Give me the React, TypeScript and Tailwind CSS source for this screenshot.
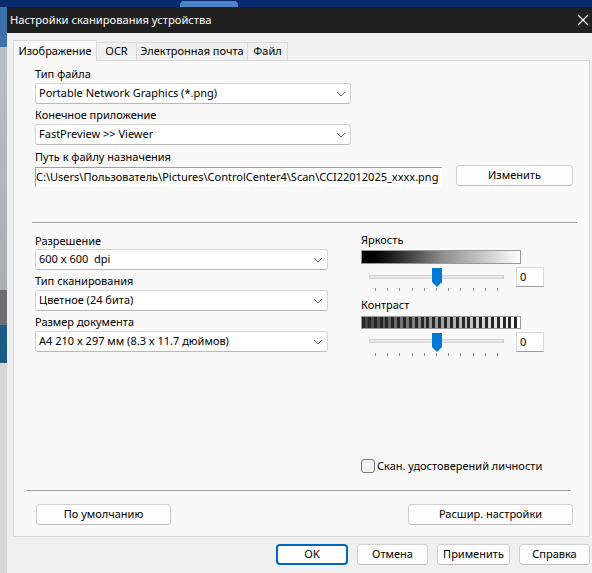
import React from 'react'

const font = { fontFamily: '"Noto Sans", "Liberation Sans", sans-serif' }

const Chevron = () => (
  <svg width="10" height="6" viewBox="0 0 10 6" className="shrink-0">
    <path d="M1 1 L5 5 L9 1" fill="none" stroke="#5f5f5f" strokeWidth="1" />
  </svg>
)

const Select = ({ value, width }: { value: string; width: string }) => (
  <div
    className={`${width} h-[21px] flex items-center justify-between pl-[3px] pr-[4px] bg-white border border-[#d5d5d5] border-b-[#b9b9b9] rounded-[3px] text-[11px] text-black`}
  >
    <span className="truncate whitespace-pre">{value}</span>
    <Chevron />
  </div>
)

const Button = ({ label, width, primary }: { label: string; width: string; primary?: boolean }) => (
  <div
    className={`${width} h-[21px] flex items-center justify-center rounded-[4px] bg-[#fdfdfd] text-[11px] text-black whitespace-nowrap ${
      primary ? 'border-2 border-[#0067c0]' : 'border border-[#d0d0d0] border-b-[#bdbdbd]'
    }`}
  >
    {label}
  </div>
)

const Label = ({ children }: { children: React.ReactNode }) => (
  <div className="h-4 leading-4 text-[11px] text-black whitespace-nowrap">{children}</div>
)

// horizontal trackbar drawn as svg, thumb in the middle
const Slider = ({ trackY }: { trackY: number }) => (
  <svg width="148" height="26" viewBox="0 0 148 26" className="shrink-0">
    <rect x="6.5" y={trackY + 0.5} width="134" height="3" fill="#e7e7e7" stroke="#d3d3d3" />
    {Array.from({ length: 11 }).map((_, i) => {
      const x = Math.round(12 + i * 12.2) + 0.5
      return <line key={i} x1={x} y1="21" x2={x} y2="24" stroke="#8f8f8f" strokeWidth="1" />
    })}
    <path d="M69 1 H79 V15 L74 20 L69 15 Z" fill="#0078d4" />
  </svg>
)

const ValueBox = () => (
  <div className="ml-[5px] w-[28px] h-[20px] bg-white border border-[#d9d9d9] border-b-[#9a9a9a] flex items-center pl-[3px] text-[11px] text-black">
    0
  </div>
)

const stripes = Array.from({ length: 27 }).map((_, i) => {
  const v = Math.round(70 + (i / 26) * 185)
  return `rgb(${v},${v},${v})`
})

const Tab = ({ label, width }: { label: string; width: string }) => (
  <div
    className={`${width} h-[18px] bg-[#f0f0f0] border border-l-0 border-b-0 border-[#d9d9d9] flex items-center justify-center text-[11px] text-black whitespace-nowrap`}
  >
    {label}
  </div>
)

export default function App() {
  return (
    <div className="w-[592px] h-[573px] flex flex-col bg-[#0a2a6e] overflow-hidden" style={font}>
      {/* desktop strip behind the dialog */}
      <div className="h-[7px] flex shrink-0">
        <div className="ml-[180px] w-[58px] h-[7px] mt-[1px] rounded-t-[4px] bg-[#4a86c8]" />
      </div>
      <div className="flex flex-1">
        <div className="w-[7px] flex flex-col shrink-0">
          <div className="h-[40px] bg-[#3d6fa8]" />
          <div className="h-[243px] bg-gradient-to-b from-[#b9c0c6] to-[#a9aeb3]" />
          <div className="h-[35px] bg-[#6b6f73]" />
          <div className="h-[38px] bg-[#1d5b88]" />
          <div className="flex-1 bg-[#d6d6d6]" />
        </div>

        <div className="flex-1 flex flex-col bg-[#f0f0f0]">
          {/* title bar */}
          <div className="h-[26px] bg-[#202020] flex items-center justify-between pl-[3px] pr-[3px] shrink-0">
            <span className="text-[11.2px] text-white">Настройки сканирования устройства</span>
            <svg width="12" height="12" viewBox="0 0 12 12">
              <path d="M1 1 L11 11 M11 1 L1 11" stroke="#ffffff" strokeWidth="1.1" />
            </svg>
          </div>

          <div className="pt-[7px] pl-[6px] pr-[2px] flex flex-col">
            {/* tabs */}
            <div className="h-[20px] flex items-end relative z-10">
              <div className="w-[84px] h-[21px] -mb-px bg-[#f9f9f9] border border-b-0 border-[#d9d9d9] flex items-center justify-center text-[11px] text-black whitespace-nowrap">
                Изображение
              </div>
              <Tab label="OCR" width="w-[40px]" />
              <Tab label="Электронная почта" width="w-[111px]" />
              <Tab label="Файл" width="w-[40px]" />
            </div>

            {/* tab panel */}
            <div className="h-[477px] bg-[#f9f9f9] border border-[#d9d9d9] pt-[5px] pl-[21px] flex flex-col">
              <Label>Тип файла</Label>
              <div className="mt-[1px]">
                <Select value="Portable Network Graphics (*.png)" width="w-[316px]" />
              </div>
              <div className="mt-[3px]">
                <Label>Конечное приложение</Label>
              </div>
              <div className="mt-[1px]">
                <Select value="FastPreview >> Viewer" width="w-[316px]" />
              </div>
              <div className="mt-[4px]">
                <Label>Путь к файлу назначения</Label>
              </div>
              <div className="flex items-start">
                <div className="mt-[2px] w-[407px] h-[20px] bg-white border-t border-l border-[#a0a0a0] overflow-hidden whitespace-nowrap flex items-center text-[11px] text-black">
                  C:\Users\Пользователь\Pictures\ControlCenter4\Scan\CCI22012025_xxxx.png
                </div>
                <div className="ml-[14px]">
                  <Button label="Изменить" width="w-[117px]" />
                </div>
              </div>

              <div className="mt-[35px] -ml-[3px] w-[545px] h-px bg-[#a0a0a0]" />

              <div className="flex h-[135px]">
                <div className="w-[293px] pt-[10px] flex flex-col">
                  <Label>Разрешение</Label>
                  <Select value="600 x 600  dpi" width="w-[293px]" />
                  <div className="mt-[3px]">
                    <Label>Тип сканирования</Label>
                  </div>
                  <div className="mt-[1px]">
                    <Select value="Цветное (24 бита)" width="w-[293px]" />
                  </div>
                  <div className="mt-[3px]">
                    <Label>Размер документа</Label>
                  </div>
                  <div className="mt-[1px]">
                    <Select value="A4 210 x 297 мм (8.3 x 11.7 дюймов)" width="w-[293px]" />
                  </div>
                </div>

                <div className="ml-[33px] pt-[9px] flex flex-col">
                  <Label>Яркость</Label>
                  <div className="mt-[2px] w-[160px] h-[14px] border border-[#9a9a9a] bg-gradient-to-r from-black via-[#8c8c8c] to-white" />
                  <div className="mt-[3px] flex items-start">
                    <div className="ml-[2px]">
                      <Slider trackY={8} />
                    </div>
                    <ValueBox />
                  </div>
                  <div className="mt-[4px]">
                    <Label>Контраст</Label>
                  </div>
                  <div className="mt-[3px] w-[160px] h-[13px] border border-[#9a9a9a] flex">
                    {stripes.map((c, i) => (
                      <div key={i} className="flex-1 flex">
                        <div className="flex-1 bg-[#262626]" />
                        <div className="flex-1" style={{ background: c }} />
                      </div>
                    ))}
                  </div>
                  <div className="mt-[3px] flex items-start">
                    <div className="ml-[2px]">
                      <Slider trackY={7} />
                    </div>
                    <ValueBox />
                  </div>
                </div>
              </div>

              <div className="mt-[101px] ml-[326px] h-[14px] flex items-center">
                <div className="w-[14px] h-[14px] rounded-[3px] border border-[#7a7a7a] bg-[#f4f4f4]" />
                <span className="ml-[2px] text-[11px] text-black whitespace-nowrap">Скан. удостоверений личности</span>
              </div>

              <div className="mt-[17px] -ml-[9px] w-[545px] h-px bg-[#a0a0a0]" />

              <div className="mt-[13px] ml-[1px] w-[537px] flex justify-between">
                <Button label="По умолчанию" width="w-[135px]" />
                <Button label="Расшир. настройки" width="w-[165px]" />
              </div>
            </div>

            {/* dialog buttons */}
            <div className="mt-[7px] flex justify-end gap-[9px]">
              <Button label="OK" width="w-[72px]" primary />
              <Button label="Отмена" width="w-[71px]" />
              <Button label="Применить" width="w-[73px]" />
              <Button label="Справка" width="w-[71px]" />
            </div>
          </div>
        </div>
      </div>
    </div>
  )
}
